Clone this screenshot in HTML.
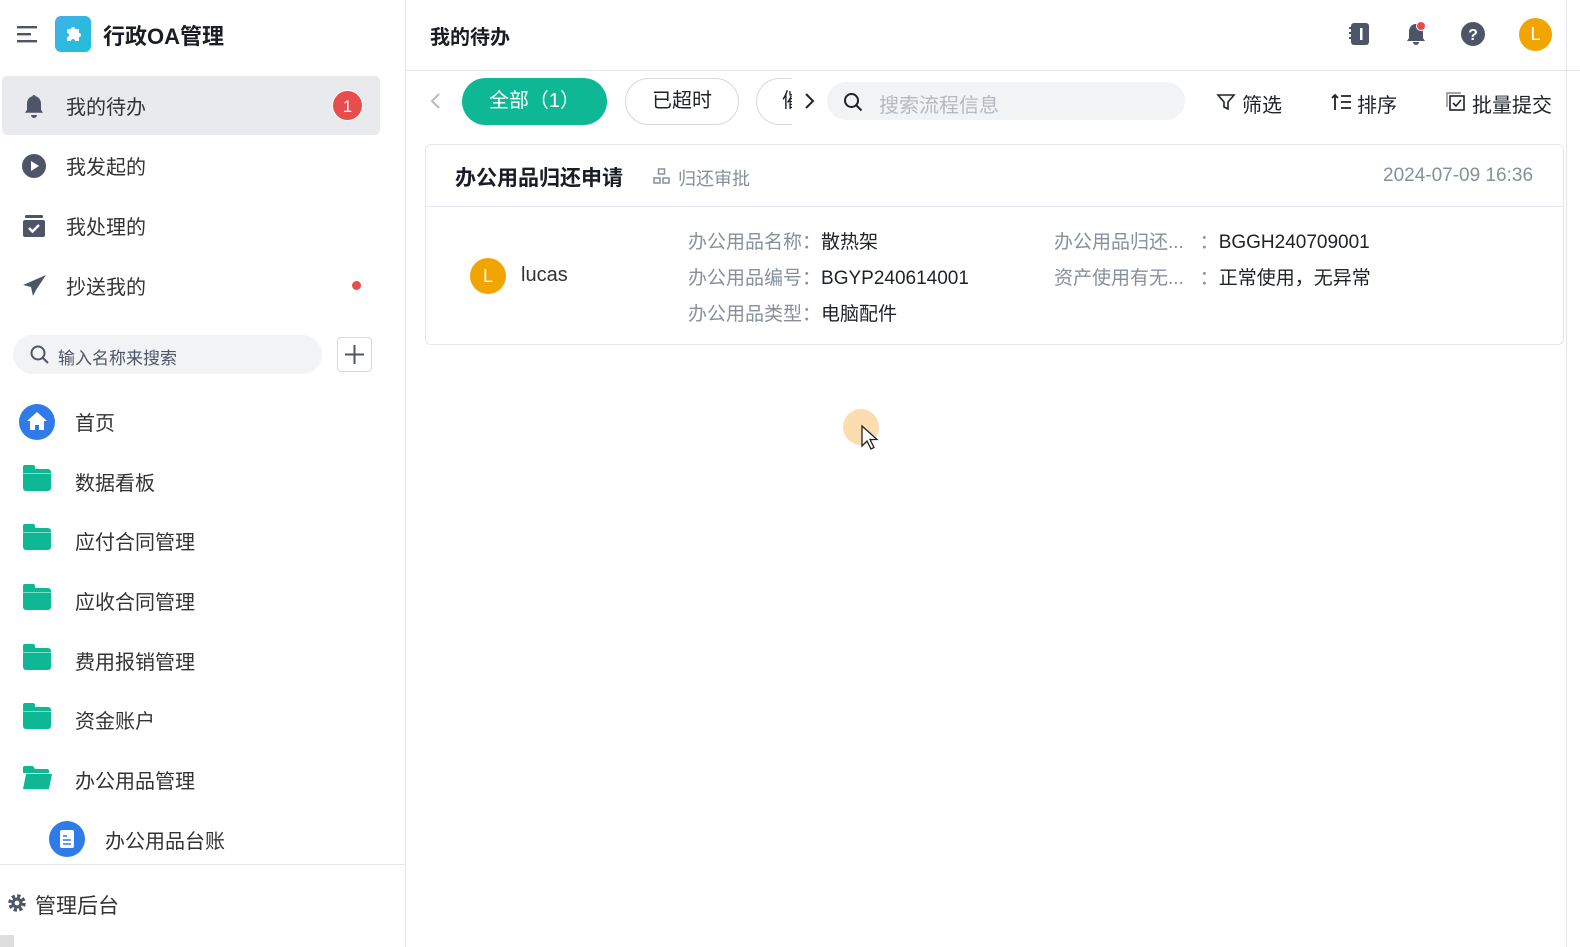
<!DOCTYPE html>
<html><head><meta charset="utf-8"><style>
*{margin:0;padding:0;box-sizing:border-box}
body{width:1580px;height:947px;overflow:hidden;background:#fff;font-family:"Liberation Sans","Noto Sans CJK SC",sans-serif;color:#1f2329;position:relative}
.abs{position:absolute}
.side{left:0;top:0;width:406px;height:947px;border-right:1px solid #e5e6eb}
.nav{left:2px;width:378px;height:59px;display:flex;align-items:center;font-size:20px;color:#333}
.nav svg{position:absolute;left:20px}
.nav span{position:absolute;left:64px}
.menu{left:0;width:400px;height:59px;font-size:20px;color:#333}
.menu span{position:absolute;left:75px;top:15px}
.folder{position:absolute;left:23px;top:17px;width:28px;height:22px;background:#0fb894;border-radius:3px}
.folder:before{content:"";position:absolute;left:0;top:-4px;width:12px;height:6px;background:#0fb894;border-radius:2px 2px 0 0}
.folder:after{content:"";position:absolute;left:0;top:4px;width:28px;height:1px;background:#7fdcc5}
.lbl{color:#86909c}
</style></head><body>
<div class="abs side"></div>
<svg class="abs" style="left:17px;top:25px" width="22" height="18"><rect x="0" y="1" width="20" height="2.4" fill="#4e5569"/><rect x="0" y="8" width="14" height="2.4" fill="#4e5569"/><rect x="0" y="15" width="20" height="2.4" fill="#4e5569"/></svg>
<div class="abs" style="left:55px;top:16px;width:36px;height:36px;border-radius:6px;background:linear-gradient(135deg,#3fb0e8,#1fc0d8)"></div>
<svg class="abs" style="left:62px;top:23px" width="22" height="22" viewBox="0 0 22 22"><path d="M5 6h4a2 2 0 1 1 4 0h4v4a2 2 0 1 1 0 4v4h-4a2 2 0 1 0-4 0H5v-4a2 2 0 1 0 0-4z" fill="#fff"/></svg>
<div class="abs" style="left:103px;top:19px;font-size:22px;font-weight:bold;color:#1a1d26">行政OA管理</div>

<div class="abs nav" style="top:76px;background:#e9eaee;border-radius:5px">
<svg width="26" height="26" viewBox="0 0 26 26" style="left:19px"><path d="M13 2c1 0 1.5.6 1.5 1.3 3.5.8 5.5 3.8 5.5 7.5v6l2 3H4l2-3v-6c0-3.7 2-6.7 5.5-7.5C11.5 2.6 12 2 13 2z" fill="#4e5569"/><path d="M10 22h6a3 3 0 0 1-6 0z" fill="#4e5569"/></svg>
<span>我的待办</span>
<div class="abs" style="left:330px;top:14px;width:31px;height:31px;border-radius:50%;background:#e84c4c;color:#fff;font-size:17px;text-align:center;line-height:31px;border:1px solid #fff">1</div>
</div>
<div class="abs nav" style="top:136px"><svg width="26" height="26" viewBox="0 0 26 26"><circle cx="12" cy="13" r="12" fill="#4e5569"/><path d="M9 8v10l8-5z" fill="#fff"/></svg><span>我发起的</span></div>
<div class="abs nav" style="top:196px"><svg width="26" height="26" viewBox="0 0 26 26"><rect x="3" y="2" width="18" height="3" rx="1" fill="#4e5569"/><rect x="1" y="7" width="22" height="17" rx="2" fill="#4e5569"/><path d="M7 15l3.5 3.5L17 12" stroke="#fff" stroke-width="2.4" fill="none"/></svg><span>我处理的</span></div>
<div class="abs nav" style="top:256px"><svg width="26" height="26" viewBox="0 0 26 26"><path d="M24 2L1 12l8 2 2 9 3-6 10-15z" fill="#4e5569"/></svg><span>抄送我的</span><div class="abs" style="left:350px;top:25px;width:9px;height:9px;border-radius:50%;background:#e84c4c"></div></div>

<div class="abs" style="left:13px;top:335px;width:309px;height:39px;border-radius:20px;background:#f2f3f5"></div>
<svg class="abs" style="left:30px;top:345px" width="20" height="20" viewBox="0 0 20 20"><circle cx="8" cy="8" r="6.5" stroke="#4e5569" stroke-width="2" fill="none"/><path d="M13 13l5 5" stroke="#4e5569" stroke-width="2"/></svg>
<div class="abs" style="left:58px;top:344px;font-size:17px;color:#4e5569">输入名称来搜索</div>
<div class="abs" style="left:337px;top:337px;width:35px;height:35px;border:1px solid #d6d8dd;border-radius:4px"></div>
<svg class="abs" style="left:344px;top:344px" width="21" height="21"><path d="M10.5 1v19M1 10.5h19" stroke="#4e5569" stroke-width="2"/></svg>

<div class="abs menu" style="top:392px"><svg class="abs" style="left:19px;top:12px" width="36" height="36" viewBox="0 0 36 36"><circle cx="18" cy="18" r="18" fill="#2f7be8"/><path d="M18 8l-10 9h3v9h5v-5h4v5h5v-9h3z" fill="#fff"/></svg><span>首页</span></div>
<div class="abs menu" style="top:452px"><div class="folder"></div><span>数据看板</span></div>
<div class="abs menu" style="top:511px"><div class="folder"></div><span>应付合同管理</span></div>
<div class="abs menu" style="top:571px"><div class="folder"></div><span>应收合同管理</span></div>
<div class="abs menu" style="top:631px"><div class="folder"></div><span>费用报销管理</span></div>
<div class="abs menu" style="top:690px"><div class="folder"></div><span>资金账户</span></div>
<div class="abs menu" style="top:750px"><svg class="abs" style="left:23px;top:16px" width="29" height="23" viewBox="0 0 29 23"><path d="M0 2a2 2 0 0 1 2-2h8l2 3h12a2 2 0 0 1 2 2v2H0z" fill="#0fb894"/><path d="M3 8h26l-3 15H0z" fill="#0fb894"/></svg><span>办公用品管理</span></div>
<div class="abs menu" style="top:810px"><svg class="abs" style="left:49px;top:11px" width="36" height="36" viewBox="0 0 36 36"><circle cx="18" cy="18" r="18" fill="#2f7be8"/><rect x="11" y="9" width="14" height="18" rx="2" fill="#fff"/><path d="M14 15h4M14 19h8M14 23h8" stroke="#2f7be8" stroke-width="1.6"/></svg><span style="left:105px">办公用品台账</span></div>
<div class="abs" style="left:0;top:864px;width:405px;height:1px;background:#e5e6eb"></div>
<svg class="abs" style="left:7px;top:893px" width="20" height="20" viewBox="0 0 20 20"><circle cx="10" cy="10" r="6.5" fill="none" stroke="#4e5569" stroke-width="4.5" stroke-dasharray="3 2.1"/><circle cx="10" cy="10" r="5.5" fill="#4e5569"/><circle cx="10" cy="10" r="2.4" fill="#fff"/></svg>
<div class="abs" style="left:35px;top:890px;font-size:21px;color:#333">管理后台</div>
<div class="abs" style="left:0;top:935px;width:14px;height:12px;background:#ddd"></div>

<div class="abs" style="left:430px;top:21px;font-size:20px;font-weight:bold;color:#1a1d26">我的待办</div>
<div class="abs" style="left:406px;top:70px;width:1174px;height:1px;background:#e5e6eb"></div>
<svg class="abs" style="left:1348px;top:22px" width="22" height="24" viewBox="0 0 22 24"><rect x="3" y="1" width="18" height="22" rx="3" fill="#4e5569"/><path d="M1 6h4M1 11h4M1 16h4" stroke="#4e5569" stroke-width="2"/><rect x="12" y="6" width="2.5" height="12" fill="#fff"/></svg>
<svg class="abs" style="left:1405px;top:20px" width="26" height="28" viewBox="0 0 26 28"><path d="M11 4c5 0 7 4 7 8v6l2 3H2l2-3v-6c0-4 2-8 7-8z" fill="#4e5569"/><path d="M8 22h6a3 3 0 0 1-6 0z" fill="#4e5569"/><circle cx="16" cy="6" r="4.5" fill="#e84c4c" stroke="#fff" stroke-width="1"/></svg>
<svg class="abs" style="left:1461px;top:22px" width="24" height="24" viewBox="0 0 24 24"><circle cx="12" cy="12" r="12" fill="#4e5569"/><text x="12" y="18" font-size="16" font-weight="bold" fill="#fff" text-anchor="middle" font-family="Liberation Sans">?</text></svg>
<div class="abs" style="left:1519px;top:18px;width:33px;height:33px;border-radius:50%;background:#f0a500;color:#fff;text-align:center;line-height:33px;font-size:18px">L</div>
<div class="abs" style="left:1566px;top:0;width:1px;height:947px;background:#e5e6eb"></div>

<svg class="abs" style="left:429px;top:92px" width="12" height="18"><path d="M10 2L3 9l7 7" stroke="#bbb" stroke-width="2" fill="none"/></svg>
<div class="abs" style="left:462px;top:78px;width:145px;height:47px;border-radius:24px;background:#0fb894;color:#fff;font-size:20px;text-align:center;line-height:47px">全部（1）</div>
<div class="abs" style="left:625px;top:78px;width:114px;height:47px;border-radius:24px;border:1px solid #d6d8dd;font-size:20px;text-align:center;line-height:45px;color:#1f2329">已超时</div>
<div class="abs" style="left:756px;top:78px;width:36px;height:47px;border-radius:24px 0 0 24px;border:1px solid #d6d8dd;border-right:none;font-size:20px;line-height:45px;padding-left:25px;overflow:hidden;color:#1f2329">催</div>
<svg class="abs" style="left:803px;top:92px" width="12" height="18"><path d="M3 2l7 7-7 7" stroke="#1f2329" stroke-width="2" fill="none"/></svg>
<div class="abs" style="left:827px;top:82px;width:358px;height:38px;border-radius:19px;background:#f2f3f5"></div>
<svg class="abs" style="left:843px;top:92px" width="20" height="20" viewBox="0 0 20 20"><circle cx="8.5" cy="8.5" r="6.5" stroke="#1f2329" stroke-width="2" fill="none"/><path d="M13.5 13.5l5 5" stroke="#1f2329" stroke-width="2"/></svg>
<div class="abs" style="left:879px;top:89px;font-size:20px;color:#b5b9c0">搜索流程信息</div>
<svg class="abs" style="left:1216px;top:92px" width="20" height="20" viewBox="0 0 20 20"><path d="M2 3h16l-6 7v7l-4-2v-5z" stroke="#1f2329" stroke-width="1.6" fill="none"/></svg>
<div class="abs" style="left:1242px;top:89px;font-size:20px">筛选</div>
<svg class="abs" style="left:1331px;top:92px" width="22" height="20" viewBox="0 0 22 20"><path d="M4 18V3M1 6l3-3 3 3M10 4h10M10 10h10M10 16h10" stroke="#1f2329" stroke-width="1.8" fill="none"/></svg>
<div class="abs" style="left:1357px;top:89px;font-size:20px">排序</div>
<svg class="abs" style="left:1446px;top:92px" width="20" height="20" viewBox="0 0 20 20"><rect x="4" y="4" width="14" height="14" stroke="#1f2329" stroke-width="1.6" fill="none"/><path d="M1 15V1h14" stroke="#888" stroke-width="1.4" fill="none"/><path d="M7 11l3 3 5-6" stroke="#1f2329" stroke-width="1.6" fill="none"/></svg>
<div class="abs" style="left:1472px;top:89px;font-size:20px">批量提交</div>

<div class="abs" style="left:425px;top:144px;width:1139px;height:201px;border:1px solid #e5e6eb;border-radius:6px"></div>
<div class="abs" style="left:426px;top:206px;width:1138px;height:1px;background:#e5e6eb"></div>
<div class="abs" style="left:455px;top:162px;font-size:21px;font-weight:bold;color:#1a1d26">办公用品归还申请</div>
<svg class="abs" style="left:653px;top:168px" width="17" height="17" viewBox="0 0 17 17"><rect x="5.5" y="1" width="6" height="5" stroke="#86909c" stroke-width="1.5" fill="none"/><rect x="1" y="10" width="6" height="5" stroke="#86909c" stroke-width="1.5" fill="none"/><rect x="10" y="10" width="6" height="5" stroke="#86909c" stroke-width="1.5" fill="none"/></svg>
<div class="abs" style="left:678px;top:165px;font-size:18px;color:#86909c">归还审批</div>
<div class="abs" style="left:1383px;top:165px;font-size:19px;color:#86909c">2024-07-09 16:36</div>
<div class="abs" style="left:470px;top:258px;width:36px;height:36px;border-radius:50%;background:#f0a500;color:#fff;text-align:center;line-height:36px;font-size:18px">L</div>
<div class="abs" style="left:521px;top:264px;font-size:20px;color:#333">lucas</div>
<div class="abs" style="left:688px;top:225px;font-size:19px;line-height:36px"><span class="lbl">办公用品名称：</span>散热架<br><span class="lbl">办公用品编号：</span>BGYP240614001<br><span class="lbl">办公用品类型：</span>电脑配件</div>
<div class="abs" style="left:1054px;top:225px;font-size:19px;line-height:36px"><span class="lbl">办公用品归还...&nbsp;&nbsp;&nbsp;：</span>BGGH240709001<br><span class="lbl">资产使用有无...&nbsp;&nbsp;&nbsp;：</span>正常使用，无异常</div>

<div class="abs" style="left:843px;top:409px;width:36px;height:36px;border-radius:50%;background:#fbd9a6;opacity:.9"></div>
<svg class="abs" style="left:860px;top:424px" width="20" height="30" viewBox="0 0 20 30"><path d="M2 2v20l5-5 4 8 3-1.5-4-8h7z" fill="#fff" stroke="#222" stroke-width="1.3"/></svg>
</body></html>
